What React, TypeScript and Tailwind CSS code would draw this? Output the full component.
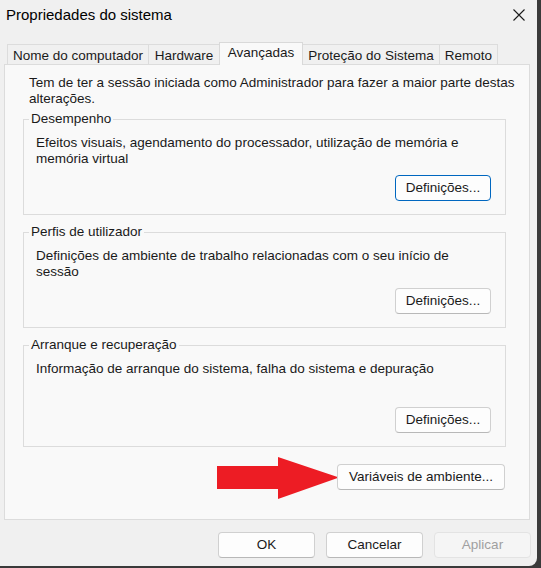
const font = { fontFamily: '"Liberation Sans", Arial, sans-serif' };

const tabs = [
  { label: "Nome do computador", w: "w-[142px]" },
  { label: "Hardware", w: "w-[72px]" },
  { label: "Avançadas", w: "w-[84px]", active: true },
  { label: "Proteção do Sistema", w: "w-[138px]" },
  { label: "Remoto", w: "w-[59px]" },
];

function Btn({
  children,
  className = "",
  focused = false,
  disabled = false,
}: {
  children: React.ReactNode;
  className?: string;
  focused?: boolean;
  disabled?: boolean;
}) {
  return (
    <button
      type="button"
      className={`h-[26px] rounded-[4px] border text-[13.5px] leading-4 ${
        focused
          ? "border-[#0067c0] bg-[#fdfdfd] text-[#1a1a1a]"
          : disabled
          ? "border-[#e3e3e3] bg-[#f5f5f5] text-[#a0a0a0]"
          : "border-[#d0d0d0] border-b-[#b8b8b8] bg-[#fdfdfd] text-[#1a1a1a]"
      } ${className}`}
    >
      {children}
    </button>
  );
}

function Group({
  title,
  children,
  className = "",
  buttonGap = "mt-[8px]",
  focused = false,
}: {
  title: string;
  children: React.ReactNode;
  className?: string;
  buttonGap?: string;
  focused?: boolean;
}) {
  return (
    <fieldset
      className={`ml-[18px] w-[483px] border border-[#dcdcdc] pl-[12px] pr-[14px] pt-[8px] pb-[13px] ${className}`}
    >
      <legend className="-ml-[7px] px-[2px] text-[13.5px] leading-4 text-[#1a1a1a]">
        {title}
      </legend>
      <p className="whitespace-nowrap text-[13.5px] leading-4 text-[#1a1a1a]">{children}</p>
      <div className={`flex justify-end ${buttonGap}`}>
        <Btn focused={focused} className="w-[96px]">
          Definições...
        </Btn>
      </div>
    </fieldset>
  );
}

export default function App() {
  return (
    <div className="w-[541px] h-[568px] bg-[#3a3a3a]" style={font}>
      <div className="w-[537px] h-[566px] bg-[#f0f0f0] rounded-br-[8px] flex flex-col">
        {/* title bar */}
        <div className="h-[30px] flex items-center justify-between pl-[6px] pr-[12px]">
          <span className="text-[15px] text-black">Propriedades do sistema</span>
          <svg width="12" height="12" viewBox="0 0 12 12" fill="none">
            <path d="M0.5 0.5L11.5 11.5M11.5 0.5L0.5 11.5" stroke="#1a1a1a" strokeWidth="1.1" />
          </svg>
        </div>

        {/* tabs */}
        <div className="mt-[12px] h-[22px] flex items-end pl-[7px]">
          {tabs.map((t, i) =>
            t.active ? (
              <div
                key={t.label}
                className={`${t.w} -ml-[1px] relative z-10 h-[23px] -mb-[1px] border border-b-0 border-[#d9d9d9] bg-[#f9f9f9] text-center text-[13.5px] leading-4 pt-[2px] text-[#1a1a1a]`}
              >
                {t.label}
              </div>
            ) : (
              <div
                key={t.label}
                className={`${t.w} ${i === 0 ? "" : "-ml-[1px]"} h-[20px] border border-b-0 border-[#dcdcdc] bg-[#f0f0f0] text-center text-[13.5px] leading-4 pt-[3px] text-[#1a1a1a]`}
              >
                {t.label}
              </div>
            )
          )}
        </div>

        {/* panel */}
        <div className="ml-[4px] w-[526px] h-[456px] border border-[#dcdcdc] bg-[#f9f9f9] flex flex-col">
          <p className="whitespace-nowrap pl-[24px] pt-[10px] text-[13.5px] leading-4 text-[#1a1a1a]">
            Tem de ter a sessão iniciada como Administrador para fazer a maior parte destas
            <br />
            alterações.
          </p>

          <Group title="Desempenho" className="mt-[4px]" focused>
            Efeitos visuais, agendamento do processador, utilização de memória e
            <br />
            memória virtual
          </Group>

          <Group title="Perfis de utilizador" className="mt-[9px]">
            Definições de ambiente de trabalho relacionadas com o seu início de
            <br />
            sessão
          </Group>

          <Group title="Arranque e recuperação" className="mt-[9px]" buttonGap="mt-[30px]">
            Informação de arranque do sistema, falha do sistema e depuração
          </Group>

          <div className="relative mt-[17px] mr-[24px] flex justify-end">
            <svg
              className="absolute left-[212px] top-[-7px]"
              width="122"
              height="43"
              viewBox="0 0 122 43"
            >
              <polygon points="0,9 61,9 61,0 122,20.5 61,42 61,32 0,32" fill="#ed1c24" />
            </svg>
            <Btn className="w-[168px] relative">Variáveis de ambiente...</Btn>
          </div>
        </div>

        {/* footer */}
        <div className="mt-[12px] w-[531px] flex justify-end gap-[11px]">
          <Btn className="w-[97px]">OK</Btn>
          <Btn className="w-[97px]">Cancelar</Btn>
          <Btn disabled className="w-[97px]">
            Aplicar
          </Btn>
        </div>
      </div>
    </div>
  );
}
